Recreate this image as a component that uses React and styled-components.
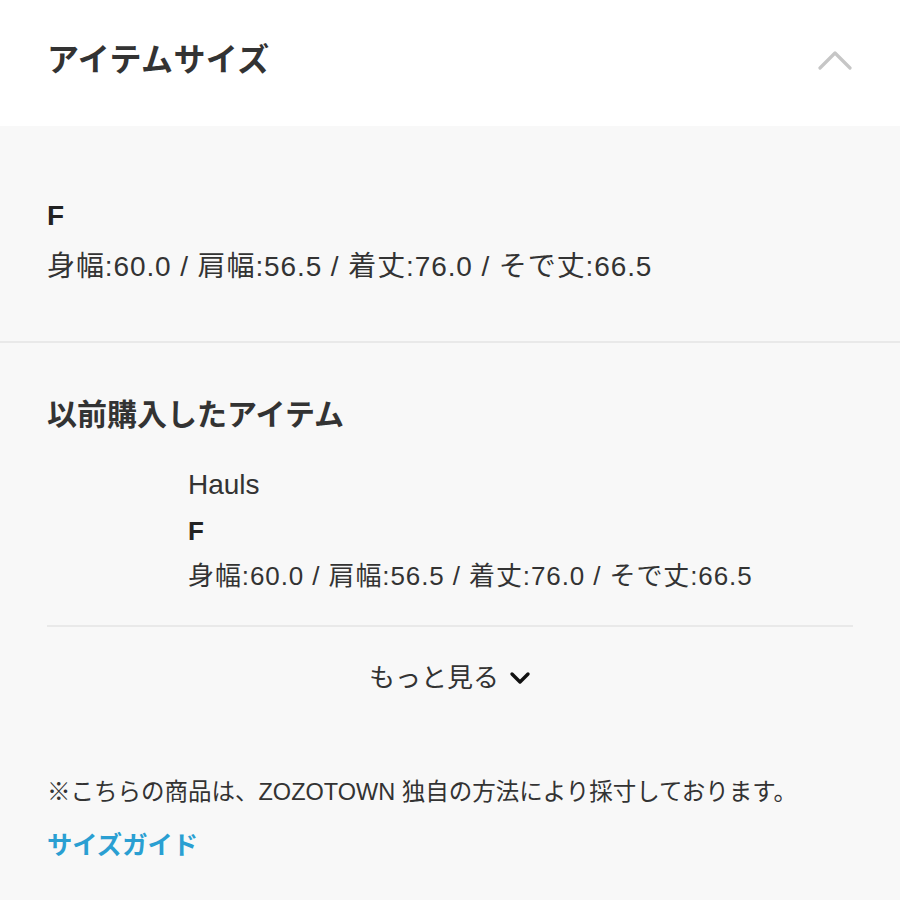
import React from 'react';
import styled, { createGlobalStyle } from 'styled-components';

const GlobalStyle = createGlobalStyle`
    html, body {
        margin: 0;
        padding: 0;
        background: #f8f8f8;
    }
    body {
        font-family: "Liberation Sans", "Noto Sans CJK JP", sans-serif;
        color: #333;
    }
`;

const sizeText = '身幅:60.0 / 肩幅:56.5 / 着丈:76.0 / そで丈:66.5';

const Page = styled.div`
    width: 900px;
    min-height: 900px;
    background: #f8f8f8;
`;

const Header = styled.div`
    display: flex;
    justify-content: space-between;
    align-items: center;
    height: 48px;
    padding: 36px 47px 42px;
    background: #fff;
`;

const HeaderTitle = styled.h2`
    margin: 0;
    font-size: 32px;
    font-weight: 700;
    letter-spacing: 0.4px;
    line-height: 48px;
    color: #333;
`;

const Toggle = styled.svg`
    width: 34px;
    height: 20px;
    margin-right: 1px;
`;

const Section = styled.div`
    padding: ${({ $top }) => $top}px 47px ${({ $bottom }) => $bottom}px;
    border-bottom: ${({ $border }) => ($border ? '2px solid #e9e9e9' : 'none')};
`;

const SizeName = styled.div`
    font-size: ${({ $small }) => ($small ? 26 : 28)}px;
    font-weight: 700;
    line-height: ${({ $small }) => ($small ? 36 : 40)}px;
    color: #222;
`;

const SizeValues = styled.div`
    margin-top: ${({ $small }) => ($small ? 9 : 11)}px;
    font-size: ${({ $small }) => ($small ? 26 : 28)}px;
    letter-spacing: 0.9px;
    line-height: ${({ $small }) => ($small ? 36 : 40)}px;
    color: #333;
`;

const SectionTitle = styled.h3`
    margin: 0;
    font-size: 30px;
    font-weight: 700;
    line-height: 40px;
    color: #333;
`;

const Purchased = styled.div`
    margin-top: 32px;
    padding: 0 0 31px 141px;
    border-bottom: 2px solid #e9e9e9;
`;

const Brand = styled.div`
    font-size: 28px;
    line-height: 36px;
    margin-bottom: 10px;
    color: #333;
`;

const MoreButton = styled.button`
    display: flex;
    align-items: center;
    justify-content: center;
    gap: 10px;
    width: 100%;
    margin-top: 31px;
    padding: 0;
    border: none;
    background: none;
    font-family: inherit;
    font-size: 26px;
    line-height: 40px;
    color: #333;
    cursor: pointer;
`;

const Note = styled.p`
    margin: 77px 0 0;
    font-size: 23.5px;
    line-height: 34px;
    color: #333;
`;

const GuideLink = styled.a`
    display: block;
    margin-top: 19px;
    font-size: 25.3px;
    font-weight: 700;
    line-height: 34px;
    color: #2a9fd2;
    text-decoration: none;
`;

const App = () => {
    return (
        <Page>
            <GlobalStyle />
            <Header>
                <HeaderTitle>アイテムサイズ</HeaderTitle>
                <Toggle viewBox="0 0 34 20">
                    <path d="M2 18 L17 3 L32 18" fill="none" stroke="#c6c6c6" strokeWidth="3.2" strokeLinecap="round" strokeLinejoin="round" />
                </Toggle>
            </Header>
            <Section $top={70} $bottom={54} $border>
                <SizeName>F</SizeName>
                <SizeValues>{sizeText}</SizeValues>
            </Section>
            <Section $top={52} $bottom={40}>
                <SectionTitle>以前購入したアイテム</SectionTitle>
                <Purchased>
                    <Brand>Hauls</Brand>
                    <SizeName $small>F</SizeName>
                    <SizeValues $small>{sizeText}</SizeValues>
                </Purchased>
                <MoreButton>
                    もっと見る
                    <svg width="22" height="14" viewBox="0 0 22 14">
                        <path d="M3 3 L11 11 L19 3" fill="none" stroke="#111" strokeWidth="3.4" strokeLinecap="round" strokeLinejoin="round" />
                    </svg>
                </MoreButton>
                <Note>※こちらの商品は、ZOZOTOWN 独自の方法により採寸しております。</Note>
                <GuideLink href="#">サイズガイド</GuideLink>
            </Section>
        </Page>
    );
};

export default App;
